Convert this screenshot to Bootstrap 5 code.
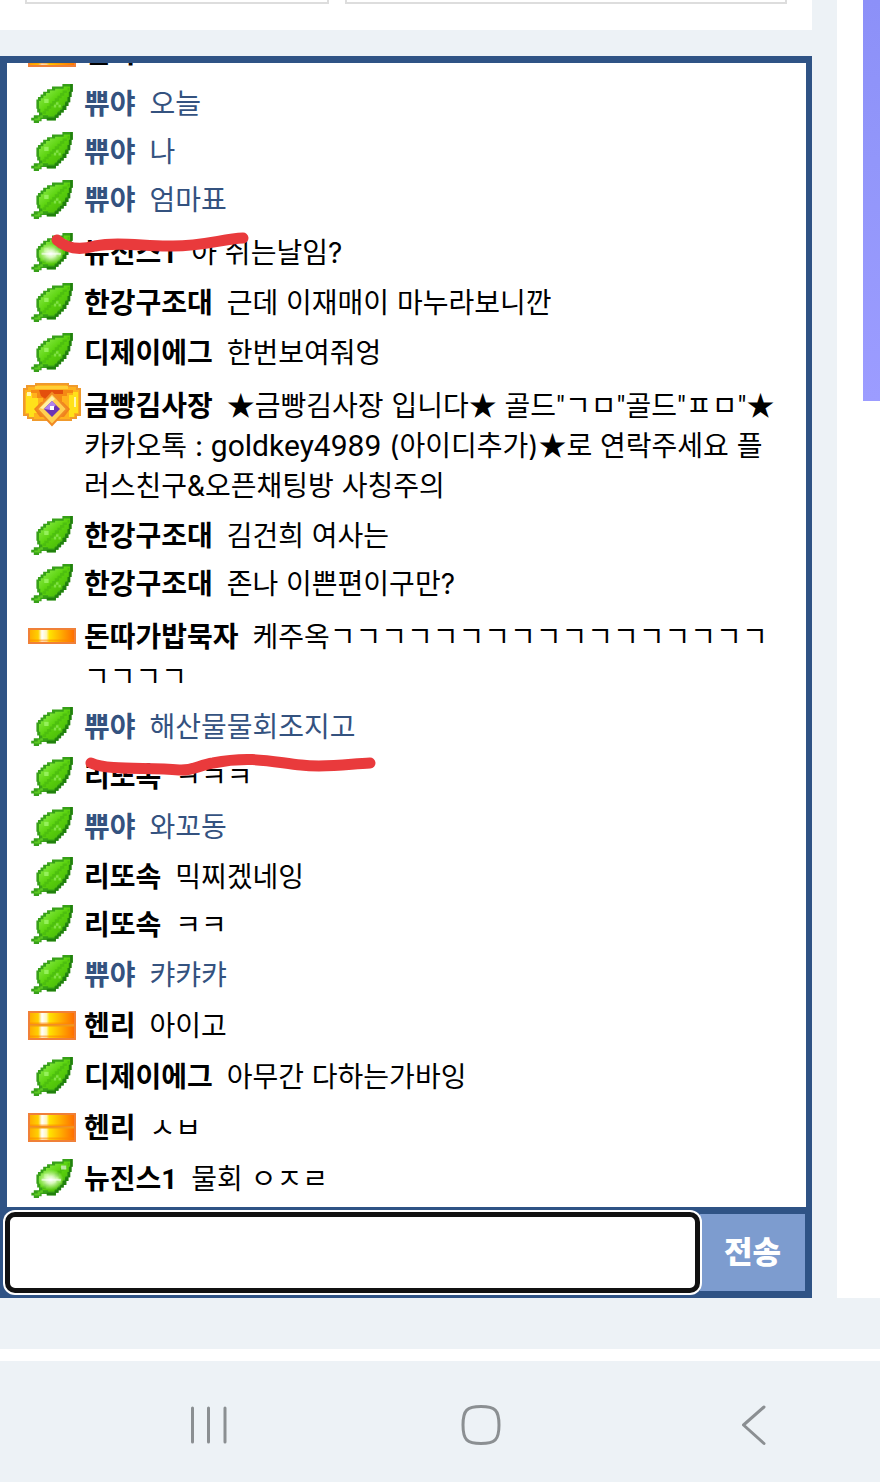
<!DOCTYPE html>
<html lang="ko">
<head>
<meta charset="utf-8">
<meta name="viewport" content="width=device-width, initial-scale=1">
<title>채팅</title>
<link href="https://cdn.jsdelivr.net/npm/bootstrap@5.3.0/dist/css/bootstrap.min.css" rel="stylesheet">
<style>
  body { background: #edf2f6; color: #000; font-family: Inter, "Noto Sans CJK KR", sans-serif; }
  .top-panel { height: 30px; padding: 0 25px; gap: 16px; margin-bottom: 26px; }
  .top-panel div { height: 4px; border: 2px solid #ddd; border-top: 0; }
  .top-panel .first-box { flex: 303 1 0; }
  .top-panel .second-box { flex: 443 1 0; }
  .content { gap: 25px; }
  .side { flex: 0 0 43px; padding-left: 26px; }
  .banner { height: 401px; background: linear-gradient(#8c90f8, #9296fa 40%, #9c9cff); }
  .chat { background: #2f5385; }
  .log { flex: 1 1 0; margin: 7px 6px 0 7px; padding: 0 6px 8px 16px; }
  .msg { gap: 3px; margin-top: 10px; font-size: 28px; line-height: 40px; }
  .msg.near { margin-top: 8px; }
  .msg.loose { margin-top: 11px; }
  .msg.far { margin-top: 13px; }
  .msg p { word-break: break-all; }
  .msg b { margin-right: 6px; font-family: Roboto, "Noto Sans CJK KR", sans-serif; line-height: 1; }
  .latin { font-family: Roboto, sans-serif; font-size: 30px; line-height: 1; }
  .star, .quote { font-family: "Noto Sans CJK KR", sans-serif; line-height: 1; }
  .quote { font-family: Roboto, "Noto Sans CJK KR", sans-serif; }
  .mine { color: #34527f; }
  .rank { flex: 0 0 58px; height: 38px; }
  .stroke-mark { left: 0; top: -20px; pointer-events: none; }
  .composer { height: 91px; padding: 5px 7px 5px 5px; }
  .composer input { min-width: 0; height: 81px; border: 5px solid #111; border-radius: 10px; box-shadow: 0 0 0 2px #fff; font-size: 28px; padding: 0 12px; outline: 0; }
  .composer button { width: 105px; height: 77px; border: 0; background: #7d9ccf; color: #fff; font-size: 31px; font-weight: 900; }
  .gap-strip { height: 51px; }
  .white-strip { height: 12px; }
  .sysnav { height: 121px; padding: 6px 107px 0 189px; }
  .sysnav button { width: 40px; height: 48px; }
</style>
</head>
<body class="d-flex flex-column vh-100 overflow-hidden">

<svg width="0" height="0" class="position-absolute" aria-hidden="true">
  <defs>
    <linearGradient id="gold">
      <stop offset="0" stop-color="#ffa800"/><stop offset=".2" stop-color="#ffd000"/><stop offset=".28" stop-color="#fff"/>
      <stop offset=".38" stop-color="#fff6b8"/><stop offset=".44" stop-color="#ffe400"/><stop offset=".66" stop-color="#ffb400"/><stop offset="1" stop-color="#ff6a00"/>
    </linearGradient>
    <linearGradient id="leaffill" x1=".2" y1=".2" x2=".8" y2=".8">
      <stop offset="0" stop-color="#7fe63a"/><stop offset=".45" stop-color="#5cd30f"/><stop offset="1" stop-color="#4cbd08"/>
    </linearGradient>
    <radialGradient id="shine"><stop offset="0" stop-color="#fff"/><stop offset=".35" stop-color="#efffdc" stop-opacity=".85"/><stop offset="1" stop-color="#d8ffb0" stop-opacity="0"/></radialGradient>
    <symbol id="leaf" viewBox="0 0 16 15">
      <path fill="#37a018" d="M12 0h4v3h-.5v2H15v2h-.7v1.500h-.8V10h-1v1h-1v1h-1v1H9.500v1H6v-.5H4v.8H3v.7H1v-1H0v-1h1v-1h2v-1h-.7V9.500H2V6h.6V5h1V4h1V3h1.500V2H8V1h4z"/>
      <path fill="url(#leaffill)" d="M12.500 1H15v2h-.5v2H14v1.500h-.8V8h-.9v1.500h-1v1h-1v1h-1v1H6.500v-.5H4.300V11h-.8V9.500H3V6.500h.7V5.500h1V4.500h1V3.500h1.500V2.500h2V1.800h3.300z"/>
      <path fill="#5cc922" d="M3.500 12h1v1h-1v1H1.200v-.7h1.300V12.500h1z"/>
      <path fill="#3fae10" d="M14 1.500h.7v1h-1v1h-1v1h-1v1h-1v1h-1v1H8.700v1h-1v1h-1v1h-1v1H4.500v-1h.6V9.500h1v-1h1v-1h1v-1h1v-1h1v-1h1v-1h1v-1H14z" opacity=".5"/>
      <path fill="#a0f56a" d="M5 5.700h1.700v1.600H5z" opacity=".8"/>
      <path fill="#8eea58" d="M9.500 7h1v1h-1zM8.700 8h.9v1h-.9zM10.500 8h.9v1h-.9z" opacity=".75"/>
      <path fill="#1d7a0c" d="M15 0h1v3h-.5v2H15v2h-.7v1.500h-.8V10h-1v1h-1v1h-1v1h-1v.9H6V13h3v-1h1v-1h1v-1h1V8.500h1V7h1V5h.5V3h.5z" opacity=".85"/>
    </symbol>
    <symbol id="leafshine" viewBox="0 0 16 15">
      <use href="#leaf" width="16" height="15"/>
      <ellipse cx="7.500" cy="8" rx="5" ry="4" fill="url(#shine)"/>
      <path fill="#fff" d="M4 7.600h7.500v.8H4zM11.500 2.500h2v1.500h-2z" opacity=".6"/>
    </symbol>
    <symbol id="bar" viewBox="0 0 48 16">
      <rect x="1" y="1" width="46" height="14" fill="url(#gold)" stroke="#f08038" stroke-width="2"/>
      <path d="M2 12.500h44" stroke="#ff8400" stroke-width="2" opacity=".55"/>
    </symbol>
    <symbol id="bars" viewBox="0 0 48 29">
      <use href="#bar" width="48" height="16"/><use href="#bar" y="13" width="48" height="16"/>
      <path d="M2 14.500h44" stroke="#f39a14" stroke-width="2"/>
    </symbol>
    <symbol id="crest" viewBox="0 0 58 44">
      <path fill="#ffb21c" stroke="#f09a2c" stroke-width="2" d="M13 1h32v2h9v3h3v26h-4v3h-5v2H10v-2H5v-3H1V6h3V3h9z"/>
      <path fill="#ffe11a" d="M3 10h6v5h6v15h-4v4H6v-4H3zM46 12h4v-3h5v21h-4v4h-5z"/>
      <path fill="#fff6b0" d="M4 9h4v4H4zM51 14h2v10h-2z"/>
      <path fill="#f58a14" d="M8 7h42v3h-6v3h-5v8H20v-6h-6v-5H8z"/>
      <path fill="#e4500c" d="M16 7h24v4H30l-6 6-6-4z"/>
      <path fill="#ffcf36" d="M12 3h33v3H12z"/>
      <path fill="#f0821c" d="M11 26l7-7h22l7 7-6 8H17z"/>
      <path fill="#ffd052" stroke="#f18a24" stroke-width="2" d="M29 10l15 16-15 16-15-16z"/>
      <path fill="#fff1a4" d="M29 13l3 3-12 10-3-1z"/>
      <path fill="#6c32b4" d="M29 18l8 8-8 8-8-8z"/>
      <path fill="#b083ee" d="M29 18l4 4-5 5-7-1z"/>
      <path fill="#fff" d="M27 23h4v4h-4z"/>
    </symbol>
  </defs>
</svg>

<main class="content d-flex flex-grow-1">
  <div class="d-flex flex-column flex-grow-1">
    <div class="top-panel d-flex bg-white"><div class="first-box"></div><div class="second-box"></div></div>

    <section class="chat d-flex flex-column flex-grow-1" aria-label="채팅">
      <div class="log bg-white overflow-hidden d-flex flex-column justify-content-end">
        <div class="msg d-flex flex-shrink-0"><span class="rank d-flex align-items-center justify-content-center"><svg width="48" height="29"><use href="#bars"/></svg></span><p class="m-0"><b>헨리</b></p></div>
        <div class="msg loose mine d-flex flex-shrink-0"><span class="rank d-flex align-items-center justify-content-center"><svg width="42" height="39"><use href="#leaf"/></svg></span><p class="m-0"><b>쀼야</b> 오늘</p></div>
        <div class="msg near mine d-flex flex-shrink-0"><span class="rank d-flex align-items-center justify-content-center"><svg width="42" height="39"><use href="#leaf"/></svg></span><p class="m-0"><b>쀼야</b> 나</p></div>
        <div class="msg near mine d-flex flex-shrink-0"><span class="rank d-flex align-items-center justify-content-center"><svg width="42" height="39"><use href="#leaf"/></svg></span><p class="m-0"><b>쀼야</b> 엄마표</p></div>
        <div class="msg far d-flex flex-shrink-0 position-relative"><span class="rank d-flex align-items-center justify-content-center"><svg width="42" height="39"><use href="#leafshine"/></svg></span><p class="m-0"><b>뉴진스1</b> 아 쉬는날임?</p>
          <svg class="stroke-mark position-absolute" width="360" height="60" fill="none" stroke="#e93a3c" stroke-width="11" stroke-linecap="round" stroke-linejoin="round"><path d="M34 27C44 36 58 37 72 33C96 28 124 34 150 33C180 33 200 26 220 25"/></svg></div>
        <div class="msg d-flex flex-shrink-0"><span class="rank d-flex align-items-center justify-content-center"><svg width="42" height="39"><use href="#leaf"/></svg></span><p class="m-0"><b>한강구조대</b> 근데 이재매이 마누라보니깐</p></div>
        <div class="msg d-flex flex-shrink-0"><span class="rank d-flex align-items-center justify-content-center"><svg width="42" height="39"><use href="#leaf"/></svg></span><p class="m-0"><b>디제이에그</b> 한번보여줘엉</p></div>
        <div class="msg far d-flex flex-shrink-0"><span class="rank d-flex align-items-center justify-content-center"><svg width="58" height="44"><use href="#crest"/></svg></span><p class="m-0"><b>금빵김사장</b> <span class="star">★</span>금빵김사장 입니다<span class="star">★</span> <span class="quote">골드"ㄱㅁ"골드"ㅍㅁ"</span><span class="star">★</span><br>카카오톡 : <span class="latin">goldkey4989</span> (아이디추가)<span class="star">★</span>로 연락주세요 플<br>러스친구&amp;오픈채팅방 사칭주의</p></div>
        <div class="msg d-flex flex-shrink-0"><span class="rank d-flex align-items-center justify-content-center"><svg width="42" height="39"><use href="#leaf"/></svg></span><p class="m-0"><b>한강구조대</b> 김건희 여사는</p></div>
        <div class="msg near d-flex flex-shrink-0"><span class="rank d-flex align-items-center justify-content-center"><svg width="42" height="39"><use href="#leaf"/></svg></span><p class="m-0"><b>한강구조대</b> 존나 이쁜편이구만?</p></div>
        <div class="msg far d-flex flex-shrink-0"><span class="rank d-flex align-items-center justify-content-center"><svg width="48" height="16"><use href="#bar"/></svg></span><p class="m-0"><b>돈따가밥묵자</b> 케주옥ㄱㄱㄱㄱㄱㄱㄱㄱㄱㄱㄱㄱㄱㄱㄱㄱㄱ<br>ㄱㄱㄱㄱ</p></div>
        <div class="msg mine d-flex flex-shrink-0"><span class="rank d-flex align-items-center justify-content-center"><svg width="42" height="39"><use href="#leaf"/></svg></span><p class="m-0"><b>쀼야</b> 해산물물회조지고</p></div>
        <div class="msg d-flex flex-shrink-0 position-relative"><span class="rank d-flex align-items-center justify-content-center"><svg width="42" height="39"><use href="#leaf"/></svg></span><p class="m-0"><b>리또속</b> ㅋㅋㅋ</p>
          <svg class="stroke-mark position-absolute" width="360" height="60" fill="none" stroke="#e93a3c" stroke-width="11" stroke-linecap="round" stroke-linejoin="round"><path d="M68 26C86 34 124 30 156 33C170 34 176 28 190 26C230 18 254 26 278 28C302 31 326 27 347 26"/></svg></div>
        <div class="msg mine d-flex flex-shrink-0"><span class="rank d-flex align-items-center justify-content-center"><svg width="42" height="39"><use href="#leaf"/></svg></span><p class="m-0"><b>쀼야</b> 와꼬동</p></div>
        <div class="msg d-flex flex-shrink-0"><span class="rank d-flex align-items-center justify-content-center"><svg width="42" height="39"><use href="#leaf"/></svg></span><p class="m-0"><b>리또속</b> 믹찌겠네잉</p></div>
        <div class="msg near d-flex flex-shrink-0"><span class="rank d-flex align-items-center justify-content-center"><svg width="42" height="39"><use href="#leaf"/></svg></span><p class="m-0"><b>리또속</b> ㅋㅋ</p></div>
        <div class="msg mine d-flex flex-shrink-0"><span class="rank d-flex align-items-center justify-content-center"><svg width="42" height="39"><use href="#leaf"/></svg></span><p class="m-0"><b>쀼야</b> 캬캬캬</p></div>
        <div class="msg loose d-flex flex-shrink-0"><span class="rank d-flex align-items-center justify-content-center"><svg width="48" height="29"><use href="#bars"/></svg></span><p class="m-0"><b>헨리</b> 아이고</p></div>
        <div class="msg loose d-flex flex-shrink-0"><span class="rank d-flex align-items-center justify-content-center"><svg width="42" height="39"><use href="#leaf"/></svg></span><p class="m-0"><b>디제이에그</b> 아무간 다하는가바잉</p></div>
        <div class="msg loose d-flex flex-shrink-0"><span class="rank d-flex align-items-center justify-content-center"><svg width="48" height="29"><use href="#bars"/></svg></span><p class="m-0"><b>헨리</b> ㅅㅂ</p></div>
        <div class="msg loose d-flex flex-shrink-0"><span class="rank d-flex align-items-center justify-content-center"><svg width="42" height="39"><use href="#leafshine"/></svg></span><p class="m-0"><b>뉴진스1</b> 물회 ㅇㅈㄹ</p></div>
      </div>
      <form class="composer d-flex align-items-center">
        <input type="text" class="flex-grow-1 bg-white position-relative z-1" aria-label="메시지">
        <button type="button">전송</button>
      </form>
    </section>
  </div>
  <aside class="side bg-white"><div class="banner"></div></aside>
</main>

<div class="gap-strip"></div>
<div class="white-strip bg-white"></div>
<nav class="sysnav d-flex align-items-center justify-content-between" aria-label="시스템">
  <button type="button" class="btn p-0 border-0" aria-label="최근 앱"><svg width="40" height="42" fill="none" stroke="#8b8f92" stroke-width="3" stroke-linecap="round"><path d="M3.500 4v34M19.500 4v34M36 4v34"/></svg></button>
  <button type="button" class="btn p-0 border-0" aria-label="홈"><svg width="40" height="42" fill="none" stroke="#8b8f92" stroke-width="3"><path d="M20 2.500C34 2.500 38 6 38 21S34 39.500 20 39.500 2 36 2 21 6 2.500 20 2.500z"/></svg></button>
  <button type="button" class="btn p-0 border-0" aria-label="뒤로"><svg width="40" height="42" fill="none" stroke="#8b8f92" stroke-width="3" stroke-linecap="round" stroke-linejoin="round"><path d="M31 3L10.500 21 31 39.500"/></svg></button>
</nav>

<script src="https://cdn.jsdelivr.net/npm/bootstrap@5.3.0/dist/js/bootstrap.bundle.min.js"></script>
</body>
</html>
